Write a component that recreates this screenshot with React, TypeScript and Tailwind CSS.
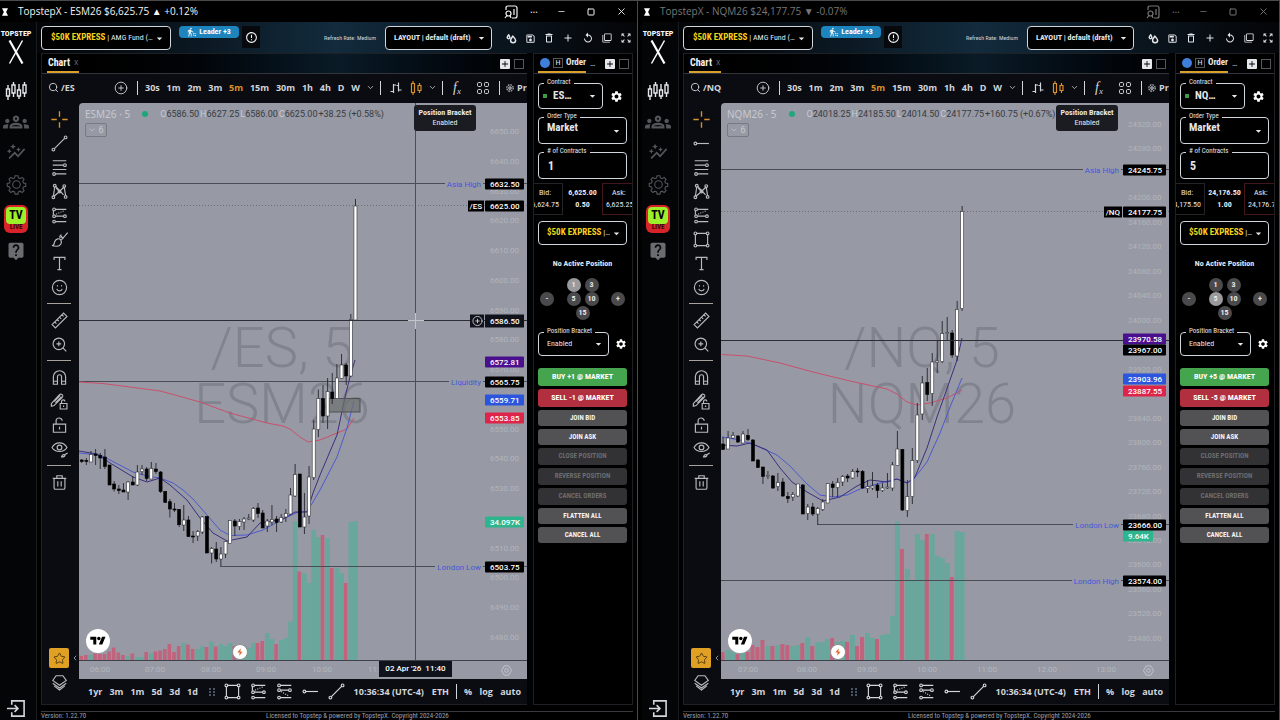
import type { ReactNode } from 'react'
import {
  MdAdd,
  MdArrowDropDown,
  MdAutoGraph,
  MdErrorOutline,
  MdLiveHelp,
  MdOutlineDelete,
  MdOutlineFilterNone,
  MdOutlineGroups,
  MdOutlineSave,
  MdReplay,
  MdSettings,
  MdTransferWithinAStation,
  MdZoomOutMap,
} from 'react-icons/md'
import { ChevronDown, ChevronLeft, CirclePlus, Minus, Search, Square, Star, X } from 'lucide-react'
import { clsx } from 'clsx'

type Dir = 'u' | 'd'
// high, low, body top, body bottom, direction, top of the volume bar
type Candle = [number, number, number, number, Dir, number]
type Tag = { y: number; text: string; tone: string; side?: string; from?: number; line?: 'solid' | 'dotted' }

type Market = {
  root: string
  contract: string
  title: string
  active: boolean
  bars: string
  ohlc: [string, string][]
  change: string
  qty: string
  picked: number
  bid: string
  last: string
  spread: string
  ask: string
  secondTool: ToolName
  sixthTool: ToolName
  originX: number
  firstX: number
  stepX: number
  axisClass: string
  marksClass: string
  ticks: { first: number; step: number; y: number; gap: number; count: number }
  hours: [string, number][]
  tags: Tag[]
  candles: Candle[]
  slow: string
  mid: string
  fast: string
  boltX: number
}

const PLOT_TOP = 103
const PLOT_BASE = 660

const es: Market = {
  root: '/ES',
  contract: 'ESM26',
  title: 'TopstepX - ESM26 $6,625.75 ▲ +0.12%',
  active: true,
  bars: 'ES…',
  ohlc: [['O', '6586.50'], ['H', '6627.25'], ['L', '6586.00'], ['C', '6625.00']],
  change: '+38.25 (+0.58%)',
  qty: '1',
  picked: 1,
  bid: '6,624.75',
  last: '6,625.00',
  spread: '0.50',
  ask: '6,625.25',
  secondTool: 'trend',
  sixthTool: 'brush',
  originX: 79,
  firstX: 81.7,
  stepX: 4.64,
  axisClass: 'w-[42px]',
  marksClass: 'right-[42px]',
  ticks: { first: 6650, step: 10, y: 131, gap: 29.75, count: 18 },
  hours: [['06:00', 100], ['07:00', 155], ['08:00', 211], ['09:00', 266], ['10:00', 322], ['11:00', 378]],
  tags: [
    { y: 183, text: '6632.50', tone: 'bg-black', side: 'Asia High', from: 79, line: 'solid' },
    { y: 205, text: '6625.00', tone: 'bg-black', from: 79, line: 'dotted' },
    { y: 361, text: '6572.81', tone: 'bg-[#4a0f8c]' },
    { y: 381, text: '6565.75', tone: 'bg-black', side: 'Liquidity', from: 79, line: 'solid' },
    { y: 399, text: '6559.71', tone: 'bg-[#2b55dd]' },
    { y: 417, text: '6553.85', tone: 'bg-[#de2448]' },
    { y: 521, text: '34.097K', tone: 'bg-[#2fb58e]' },
    { y: 566, text: '6503.75', tone: 'bg-black', side: 'London Low', from: 220, line: 'solid' },
  ],
  candles: [
    [459, 463, 460, 461.5, 'd', 656], [458, 465, 460.5, 461.5, 'd', 655], [451, 462, 454.5, 462, 'u', 655],
    [449, 465, 454, 455.5, 'd', 653.5], [453, 469, 455.5, 458, 'd', 654], [449, 469, 457, 466.5, 'd', 654],
    [465, 485, 465, 485, 'd', 651.5], [481, 491.5, 484, 489, 'd', 647.5], [485, 494, 489, 490.5, 'd', 652.5],
    [483, 492, 490, 492, 'd', 655], [481, 500, 482, 492, 'u', 656], [476, 485, 482, 485, 'd', 653.5],
    [465, 486, 472, 485, 'u', 657], [465, 475, 469, 471.5, 'u', 657], [467, 481, 469, 478.5, 'd', 652],
    [462, 479, 468.5, 479, 'u', 653.5], [463, 474, 469, 471.5, 'd', 651.5], [471, 493, 472, 491.5, 'd', 650.5],
    [491, 503, 491.5, 502.3, 'd', 649], [499, 517.5, 501.7, 509, 'd', 644], [503, 512, 509, 510, 'd', 652],
    [509, 527, 509.5, 524.7, 'd', 646], [505, 531, 520, 525, 'u', 643], [516, 537, 520, 536.5, 'd', 644.5],
    [531, 543, 536, 537, 'd', 649], [530, 541, 531.5, 536, 'u', 649], [516, 534, 517, 532, 'u', 646.5],
    [516, 553, 516.5, 553, 'd', 647], [547, 563.5, 548.5, 553, 'u', 641.5], [542, 562, 549, 559, 'd', 646.5],
    [547, 566, 554, 559, 'u', 644], [541, 558, 541.5, 554, 'u', 646], [520, 544, 520.5, 543.5, 'u', 643],
    [519, 536, 521, 526, 'd', 646], [519, 530, 521.5, 526.5, 'u', 647], [517, 530, 519, 522, 'u', 646],
    [514, 520, 518, 519, 'u', 648], [507, 522, 508.5, 520, 'u', 643], [503, 518, 508, 513.5, 'd', 643],
    [510, 528, 513, 528, 'd', 641], [519, 532, 521, 526, 'u', 633], [505, 525, 519.5, 522, 'u', 639],
    [516, 532, 519, 522.5, 'd', 644], [514, 523, 517.5, 522, 'u', 640], [509, 522, 513.5, 517, 'u', 638],
    [488, 515, 495, 514, 'u', 621.5], [464, 497, 474.5, 496, 'u', 521.5], [474, 527, 474, 527, 'd', 571.5],
    [493, 534, 517, 527, 'u', 573], [466, 524, 477, 516, 'u', 583], [420, 480, 429, 477.5, 'u', 530],
    [389.5, 437, 398.5, 429.5, 'u', 537], [385, 423, 398.5, 416, 'd', 535], [378, 429, 391.5, 416, 'u', 538],
    [373, 404, 392, 398.5, 'd', 568], [364, 399, 378, 398.5, 'u', 568], [354, 379, 365, 378.5, 'u', 573],
    [363, 385, 365, 376, 'd', 583], [314, 377, 319.5, 376, 'u', 522], [199, 320, 206, 320, 'u', 521],
  ],
  slow: '79,382 103,383.5 130,387 160,391 175,395 200,402 230,413 267,423 283,426 290,429 300,437 308,442 320,440 347,429 354,418',
  mid: '79,453 100,455 110,460 133,472 147,476 160,478 173,483 183,490 193,499 207,515 220,530 230,535.5 247,535 263,530 283,519 297,512.5 307,511.5 313,502 320,490 337,457 347,428 354,401',
  fast: '79,451 97,454 110,463 133,477 147,482 160,478 170,485 187,500 200,518 213,533 227,541 247,537 260,523 283,519 295,512 307,512 313,493 320,475 337,435 345,397 350,377 355,360',
  boltX: 240,
}

const nq: Market = {
  root: '/NQ',
  contract: 'NQM26',
  title: 'TopstepX - NQM26 $24,177.75 ▼ -0.07%',
  active: false,
  bars: 'NQ…',
  ohlc: [['O', '24018.25'], ['H', '24185.50'], ['L', '24014.50'], ['C', '24177.75']],
  change: '+160.75 (+0.67%)',
  qty: '5',
  picked: 5,
  bid: '24,175.50',
  last: '24,176.50',
  spread: '1.00',
  ask: '24,176.75',
  secondTool: 'ray',
  sixthTool: 'rect',
  originX: 721,
  firstX: 723.1,
  stepX: 4.98,
  axisClass: 'w-[46px]',
  marksClass: 'right-[46px]',
  ticks: { first: 24320, step: 40, y: 124, gap: 24.47, count: 22 },
  hours: [['07:00', 748], ['08:00', 807], ['09:00', 867], ['10:00', 927], ['11:00', 987], ['12:00', 1047], ['13:00', 1106]],
  tags: [
    { y: 169, text: '24245.75', tone: 'bg-black', side: 'Asia High', from: 721, line: 'solid' },
    { y: 211, text: '24177.75', tone: 'bg-black', from: 721, line: 'dotted' },
    { y: 338, text: '23970.58', tone: 'bg-[#4a0f8c]' },
    { y: 349, text: '23967.00', tone: 'bg-black' },
    { y: 378, text: '23903.96', tone: 'bg-[#2b55dd]' },
    { y: 390, text: '23887.55', tone: 'bg-[#de2448]' },
    { y: 535, text: '9.64K', tone: 'bg-[#2fb58e]' },
    { y: 524, text: '23666.00', tone: 'bg-black', side: 'London Low', from: 817, line: 'solid' },
    { y: 580, text: '23574.00', tone: 'bg-black', side: 'London High', from: 721, line: 'solid' },
  ],
  candles: [
    [437, 450, 444, 449.5, 'd', 652], [431, 449, 438, 449, 'u', 650], [432, 439, 435.5, 438, 'u', 652],
    [435, 443, 436, 442, 'd', 654], [431, 443, 434, 443, 'u', 653], [429, 441, 435.5, 439.5, 'd', 652],
    [439, 461, 440, 461, 'd', 645], [459, 468, 460, 467.5, 'd', 647], [467, 484, 467, 476.5, 'd', 640],
    [471, 479, 475.5, 476.5, 'u', 646], [475, 489, 476, 488, 'd', 646], [473, 491, 482.5, 486.5, 'u', 645],
    [478, 497, 482, 496, 'd', 644], [492, 503, 496.5, 498.5, 'd', 645], [492, 501, 494.5, 497, 'u', 646],
    [484, 497, 484, 496, 'u', 645], [484, 514, 485, 514, 'd', 643], [504, 520, 507, 513.5, 'u', 637],
    [503, 516, 507, 514, 'd', 646], [507, 524.5, 508.5, 514, 'u', 642], [499, 511, 502, 509.5, 'u', 642],
    [483, 503, 483.5, 503, 'u', 639], [481, 497, 484, 487.5, 'd', 638], [478, 497, 482.5, 487.5, 'u', 642],
    [475, 486, 476.5, 482, 'u', 641], [474, 482, 476, 478, 'd', 642], [469, 479, 471.5, 478, 'u', 635],
    [468, 477, 471, 472, 'd', 646], [470, 489, 471.5, 488, 'd', 637], [480, 493, 486.5, 488.5, 'u', 633],
    [472, 490, 486, 488, 'u', 638], [483, 498, 485, 490.5, 'd', 639], [483, 492, 488, 490.5, 'u', 635],
    [473, 489, 487, 488, 'u', 634], [462, 491, 465, 488, 'u', 616], [431, 466, 449, 465.5, 'u', 521.5],
    [449, 511, 449.5, 510, 'd', 549], [480, 517, 496.5, 510.5, 'u', 569], [448, 504, 460.5, 496.5, 'u', 580],
    [403, 463, 415, 460.5, 'u', 534], [376, 420, 383, 414, 'u', 540], [368, 401, 382.5, 394.5, 'd', 534],
    [353, 406, 362, 393.5, 'u', 534], [341, 373, 361, 362.5, 'u', 556], [321, 363, 333.5, 361.5, 'u', 558],
    [317, 341, 332.5, 333.5, 'u', 563], [330, 358, 333, 355, 'd', 577], [301, 361, 309.5, 356, 'u', 531],
    [206, 311, 211.5, 308.5, 'u', 532],
  ],
  slow: '722,354.5 747,356 780,363 813,372 850,381 887,389 897,394 907,402 917,405 930,403 947,398 962,390',
  mid: '722,437 740,440 757,446 777,455 790,466 807,484 820,495 833,497 847,495 860,489 880,483 897,479 907,483 913,480 927,462 940,433 950,407 962,378',
  fast: '722,445 737,446 750,443 767,450 780,468 792,482 807,492 823,501 840,497 857,486 870,480 887,482 897,479 907,483 915,477 927,448 937,417 950,380 957,360 962,338',
  boltX: 838,
}

const condensed = "font-['Roboto_Condensed','Liberation_Sans_Narrow',Roboto,sans-serif]"

/* ---------- drawing tool icons, 28px grid ---------- */

const tools = {
  cross: <path d="M14 2v8M14 18v8M2 14h8M18 14h8" strokeWidth="2" />,
  trend: (
    <>
      <circle cx="5" cy="23" r="2" />
      <circle cx="23" cy="5" r="2" />
      <path d="M6.500 21.500l15-15" />
    </>
  ),
  ray: (
    <>
      <circle cx="5" cy="14" r="2" />
      <path d="M7 14h18" />
    </>
  ),
  fib: (
    <>
      <path d="M4 4h20M4 10.500h16M4 17h20M8 23.500h16" />
      <circle cx="22" cy="10.500" r="2" />
      <circle cx="6" cy="23.500" r="2" />
    </>
  ),
  pattern: (
    <>
      <path d="M7 7L5 21M8 6l12 13M9 9l5 5 7-7M21 8l2 12M6 21l8-7" />
      <circle cx="7" cy="5.5" r="2" />
      <circle cx="21" cy="6" r="2" />
      <circle cx="5" cy="22.500" r="2" />
      <circle cx="23" cy="22" r="2" />
      <circle cx="14" cy="14" r="2" />
    </>
  ),
  levels: (
    <>
      <path d="M8 5h16M8 15h12M8 23h16M5 7v6" />
      <path d="M9 12l12-5" strokeDasharray="1.500 2" />
      <circle cx="6" cy="5" r="2" />
      <circle cx="6" cy="15" r="2" />
      <circle cx="22" cy="15" r="2" />
      <circle cx="6" cy="23" r="2" />
    </>
  ),
  levelsDown: (
    <>
      <path d="M8 5h16M8 12h12M8 23h16" />
      <path d="M9 14l12 7" strokeDasharray="1.500 2" />
      <circle cx="6" cy="5" r="2" />
      <circle cx="6" cy="12" r="2" />
      <circle cx="22" cy="12" r="2" />
      <circle cx="6" cy="23" r="2" />
    </>
  ),
  brush: <path d="M3 23c3 0 3-3 4-6 2-5 7-5 9-2s0 9-6 9c-3 0-5 0-7-1zM16 14c2 0 3-1 4-3l6-7M15 12c-1-2 0-4 2-5M17 9c0 2 1 3 3 3" />,
  rect: (
    <>
      <path d="M7 5h14M7 23h14M5 7v14M23 7v14" />
      <circle cx="5" cy="5" r="2" />
      <circle cx="23" cy="5" r="2" />
      <circle cx="5" cy="23" r="2" />
      <circle cx="23" cy="23" r="2" />
    </>
  ),
  text: <path d="M6 9V5h16v4M14 5v18M11 23h6" />,
  smile: (
    <>
      <circle cx="14" cy="14" r="10.500" />
      <path d="M10 16c1 4 7 4 8 0M11 10.500v2M17 10.500v2" />
    </>
  ),
  ruler: <path d="M3 20L20 3l5 5L8 25zM7 16l2.500 2.500M10.500 12.500L13 15M14 9l2.500 2.500M17.500 5.500L20 8" />,
  zoom: (
    <>
      <circle cx="13" cy="13" r="8.500" />
      <path d="M19 19l5 5M13 9.500v7M9.500 13h7" />
    </>
  ),
  magnet: <path d="M5 24V13a9 9 0 0118 0v11h-6V13a3 3 0 00-6 0v11zM5 19.500h6M17 19.500h6" />,
  penLock: (
    <>
      <path d="M2 17L14 4q2-2 4 0t0 4L6 20l-4 1zM6 14l9-9M8 16l9-9" />
      <path d="M15 17h10v8H15zM17 17v-3a2.500 2.500 0 015 0M20 20v2" />
    </>
  ),
  lock: <path d="M5 12h18v12H5zM9 12V8a4.500 4.500 0 019-1M14 16v4" />,
  eye: (
    <>
      <path d="M3 11c5-9 17-9 22 0-5 8-17 8-22 0z" />
      <circle cx="14" cy="11" r="3.500" />
      <path d="M17 25c1-4 3-4 5-3 0 3-3 3-5 3zM21 22l5-3" />
    </>
  ),
  trash: <path d="M4 8h20M10 8V4h8v4M6 8v14q0 2 2 2h12q2 0 2-2V8M11.500 12v8M16.500 12v8" />,
  layers: <path d="M4 11l5-7h10l5 7-10 7zM4 15l10 7 10-7M6 19l8 6 8-6" />,
}

type ToolName = keyof typeof tools

function ToolIcon({ name, className = 'size-[19px]' }: { name: ToolName; className?: string }) {
  return (
    <svg viewBox="0 0 28 28" className={className} fill="none" stroke="currentColor" strokeWidth="1.7" aria-hidden>
      {tools[name]}
    </svg>
  )
}

function ToolButton({ name, className }: { name: ToolName; className?: string }) {
  return (
    <button type="button" aria-label={name} className={clsx('flex h-6 w-full items-center justify-center', className)}>
      <ToolIcon name={name} />
    </button>
  )
}

/* ---------- window chrome ---------- */

function TitleBar({ market }: { market: Market }) {
  return (
    <header
      className={clsx(
        "flex h-[21px] shrink-0 items-center bg-black pl-0.5 font-['Open_Sans',sans-serif] text-[10px]",
        market.active ? 'text-gray-100' : 'text-[#777]',
      )}
    >
      <svg viewBox="0 0 8 10" className="mr-2 h-2 w-[6px] fill-white" aria-hidden>
        <path d="M0 0h8L5.500 5 8 10H0l2.500-5z" />
      </svg>
      <span className="flex-1 whitespace-nowrap pl-0.5">{market.title}</span>
      <button type="button" aria-label="Side panel" className="flex w-[22px] justify-center">
        <svg viewBox="0 0 14 14" className="size-[14px]" fill="none" stroke="currentColor" strokeWidth="1.200" aria-hidden>
          <path d="M2 5V3q0-2 2-2h7q2 0 2 2v8q0 2-2 2H8M10 4v6" />
          <circle cx="4.500" cy="8.500" r="2.500" />
          <path d="M3 10.500L1 13M6 10.500L7 13" />
        </svg>
      </button>
      <button type="button" aria-label="More" className="w-6 pb-1 text-center">
        …
      </button>
      <button type="button" aria-label="Minimize" className="flex w-[30px] justify-center">
        <Minus size={9} />
      </button>
      <button type="button" aria-label="Maximize" className="flex w-[30px] justify-center">
        <Square size={8} strokeWidth={3} />
      </button>
      <button type="button" aria-label="Close" className="mr-px flex w-[30px] justify-center">
        <X size={11} />
      </button>
    </header>
  )
}

function SideBar() {
  return (
    <nav className="flex w-[37px] shrink-0 flex-col items-center border-r border-[#1a1b1f] bg-[#040507] pr-1 text-[#55565a]">
      <a href="#home" aria-label="Topstep X" className="flex flex-col items-center pt-1.5 text-white">
        <span className={clsx(condensed, 'text-[8px]/[12px] font-bold')}>TOPSTEP</span>
        <svg viewBox="0 0 16 24" className="h-6 w-4" fill="none" stroke="currentColor" aria-hidden>
          <path d="M1.500 0.500L14.500 23.500" strokeWidth="2.200" />
          <path d="M14.500 0.500L1.500 23.500" strokeWidth="1.500" />
        </svg>
      </a>
      <button type="button" aria-label="Trade" className="mt-[15px] flex h-6 items-center text-gray-200">
        <svg viewBox="0 0 22 20" className="h-5 w-[22px]" fill="#040507" stroke="currentColor" strokeWidth="1.400" aria-hidden>
          <path d="M3 4v15M8.500 1v15M14 3v15M19.500 1v15" />
          <path d="M1.500 8h3v7h-3zM7 4h3v8H7zM12.500 9h3v6h-3zM18 4h3v8h-3z" />
        </svg>
      </button>
      <button type="button" aria-label="Community" className="mt-1.5">
        <MdOutlineGroups size={26} />
      </button>
      <button type="button" aria-label="Performance" className="mt-[7px]">
        <MdAutoGraph size={20} />
      </button>
      <button type="button" aria-label="Settings" className="mt-3">
        <svg viewBox="0 0 24 25" className="size-[21px]" fill="none" stroke="currentColor" strokeWidth="1.300" aria-hidden>
          <path d="M10.300 2h3.400l.6 2.700 2 .8 2.400-1.500 2.300 2.300-1.500 2.400.8 2 2.700.6v3.400l-2.700.6-.8 2 1.500 2.400-2.300 2.300-2.400-1.500-2 .8-.6 2.700h-3.400l-.6-2.700-2-.8-2.400 1.500L3 19.700l1.500-2.400-.8-2-2.700-.6v-3.400l2.700-.6.8-2L3 6.300 5.300 4l2.400 1.500 2-.8z" />
          <circle cx="12" cy="12.500" r="4.500" />
        </svg>
      </button>
      <button
        type="button"
        aria-label="TV live"
        className={clsx(condensed, 'mt-2.5 flex h-7 w-6 flex-col items-center overflow-hidden rounded-md bg-[#d8232a] p-0.5 text-black')}
      >
        <span className="w-full rounded-sm bg-[#9bf02a] text-[12px]/[17px] font-bold">TV</span>
        <span className="text-[7px]/[7px] font-bold text-[#3a0709]">LIVE</span>
      </button>
      <button type="button" aria-label="Help" className="mt-2 text-[#6b6c70]">
        <MdLiveHelp size={20} />
      </button>
      <button type="button" aria-label="Log out" className="mt-auto mb-0.5 text-gray-300">
        <svg viewBox="0 0 20 20" className="size-[19px]" fill="none" stroke="currentColor" strokeWidth="1.700" aria-hidden>
          <path d="M5 6V2h13v16H5v-4M0 10h11M8 6.500l3.500 3.500L8 13.500" />
        </svg>
      </button>
    </nav>
  )
}

function AccountButton({ label, className }: { label: string; className?: string }) {
  return (
    <button
      type="button"
      aria-haspopup="listbox"
      className={clsx('flex items-center justify-between rounded-sm border border-gray-300 bg-black text-[8px] text-gray-200', className)}
    >
      <span className="whitespace-nowrap">
        <span className="text-[9px] font-bold text-[#f5d21b]">$50K EXPRESS</span> {label}
      </span>
      <MdArrowDropDown size={13} className="shrink-0" />
    </button>
  )
}

function Select({ id, value, className }: { id: string; value: string; className?: string }) {
  return (
    <div className="relative">
      <select
        id={id}
        defaultValue={value}
        className={clsx('block w-full appearance-none rounded-sm border border-gray-300 bg-black px-[8px] text-gray-200', className)}
      >
        <option>{value}</option>
      </select>
      <MdArrowDropDown size={13} className="pointer-events-none absolute top-1/2 right-1 -translate-y-1/2 text-gray-200" />
    </div>
  )
}

function AppHeader({ market }: { market: Market }) {
  const actions: [string, ReactNode][] = [
    [
      'Link colors',
      <svg viewBox="0 0 12 12" className="size-[11px]" fill="none" stroke="currentColor" strokeWidth="1.600" aria-hidden>
        <path d="M3 2C1.500 3.500 1 4.500 1.500 5.500S3.500 6.500 4 5.500 4 3.500 3 2zM7.500 3.500C6 5.500 5 6.500 5 8a2.700 2.700 0 005.500 0c0-1.500-1-2.500-3-4.500z" />
      </svg>,
    ],
    ['Save', <MdOutlineSave size={11} />],
    ['Delete', <MdOutlineDelete size={12} />],
    ['Add', <MdAdd size={12} />],
    ['Reset', <MdReplay size={12} />],
    ['Duplicate', <MdOutlineFilterNone size={10} />],
    ['Full screen', <MdZoomOutMap size={12} />],
  ]
  return (
    <div className={clsx(condensed, 'flex h-[31px] shrink-0 items-start text-[9px]')}>
      <AccountButton label="| AMG Fund (…" className="mt-1 h-6 w-[130px] pr-1 pl-[9px]" />
      <button
        type="button"
        className="mt-1 ml-2 flex h-3 w-15 items-center justify-center gap-0.5 rounded-[4px] bg-[#1d84bd] text-[8px]/[12px] font-bold text-white"
      >
        <MdTransferWithinAStation size={10} />
        Leader +3
      </button>
      <button type="button" aria-label="Notices" className="mt-1 ml-[3px] flex h-[22px] w-[18px] items-center justify-center bg-[#07090d] text-gray-100">
        <MdErrorOutline size={13} />
      </button>
      <span className="mt-2.5 mr-[9px] ml-auto text-[6px]/[12px] text-gray-300">Refresh Rate: Medium</span>
      <div className="mt-1 w-[107px]">
        <Select id={`layout-${market.contract}`} value="LAYOUT | default (draft)" className="h-6 text-[8px] font-bold" />
      </div>
      <div className="mt-1 flex h-6 w-[141px] items-center justify-between pl-3 text-gray-200">
        {actions.map(([label, icon]) => (
          <button key={label} type="button" aria-label={label} className="flex w-[14px] justify-center">
            {icon}
          </button>
        ))}
      </div>
    </div>
  )
}

function PanelCorner() {
  return (
    <div className="ml-auto flex items-center gap-1 pr-[3px]">
      <button type="button" aria-label="Add tab" className="flex size-[10px] items-center justify-center rounded-[1px] bg-gray-200 text-black">
        <MdAdd size={10} />
      </button>
      <button type="button" aria-label="Maximize panel" className="size-[10px] border border-[#55565a]" />
    </div>
  )
}

/* ---------- chart ---------- */

const intervals = ['30s', '1m', '2m', '3m', '5m', '15m', '30m', '1h', '4h', 'D', 'W']
const ranges = ['1yr', '3m', '1m', '5d', '3d', '1d']

function Bar({ className = 'h-3.5' }: { className?: string }) {
  return <span className={clsx('w-px shrink-0 bg-gray-300', className)} />
}

function ChartToolbar({ market }: { market: Market }) {
  return (
    <div className="flex h-[29px] shrink-0 items-center overflow-hidden bg-[#0b0c11] pb-0.5 pl-1.5 text-[9px] font-bold whitespace-nowrap text-gray-300">
      <button type="button" className="flex w-[66px] shrink-0 items-center gap-0.5">
        <Search size={11} />
        {market.root}
      </button>
      <button type="button" aria-label="Compare" className="shrink-0">
        <CirclePlus size={14} strokeWidth={1.5} />
      </button>
      <Bar className="ml-[9px] h-3.5" />
      <div className="flex w-[228px] shrink-0 items-center justify-between pr-1.5 pl-[7px]">
        {intervals.map((t) => (
          <button key={t} type="button" className={t === '5m' ? 'text-[#d9912b]' : undefined}>
            {t}
          </button>
        ))}
      </div>
      <ChevronDown size={9} className="shrink-0" />
      <Bar className="ml-[5px] h-3.5" />
      <button type="button" aria-label="Bars" className="w-[29px] shrink-0 pl-[9px]">
        <svg viewBox="0 0 12 12" className="size-3" fill="none" stroke="currentColor" strokeWidth="1.200" aria-hidden>
          <path d="M3.500 2v9M0.500 9.500h3M3.500 3h2.500M8.500 0.500v9M6.500 3.500h2M8.500 8h3" />
        </svg>
      </button>
      <button type="button" aria-label="Candles" className="w-[18px] shrink-0 text-[#d9912b]">
        <svg viewBox="0 0 12 14" className="h-3.5 w-3" fill="none" stroke="currentColor" strokeWidth="1.200" aria-hidden>
          <path d="M1.500 2.500h3v9h-3zM3 0v2.500M3 11.500V14M8 4.500h3v5H8zM9.500 2v2.500M9.500 9.500V12" />
        </svg>
      </button>
      <ChevronDown size={9} className="shrink-0" />
      <Bar className="ml-[5px] h-3.5" />
      <button type="button" aria-label="Indicators" className="w-[34px] shrink-0 pl-2.5 text-left font-['Liberation_Serif',serif] text-[14px]/[14px] font-normal italic">
        f<sub className="text-[9px]">x</sub>
      </button>
      <button type="button" aria-label="Layouts" className="w-[22px] shrink-0">
        <svg viewBox="0 0 12 12" className="size-3" fill="none" stroke="currentColor" aria-hidden>
          <rect x="0.500" y="0.500" width="4" height="4" rx="1.200" />
          <rect x="7.500" y="0.500" width="4" height="4" rx="1.200" />
          <rect x="0.500" y="7.500" width="4" height="4" rx="1.200" />
          <rect x="7.500" y="7.500" width="4" height="4" rx="1.200" />
        </svg>
      </button>
      <Bar className="h-3.5" />
      <button type="button" className="flex shrink-0 items-center gap-[3px] pl-1.5">
        <svg viewBox="0 0 10 10" className="size-2" fill="none" stroke="currentColor" strokeWidth="1.300" aria-hidden>
          <circle cx="5" cy="5" r="4" strokeDasharray="2 1.140" />
          <circle cx="5" cy="5" r="1.500" />
        </svg>
        Product
      </button>
    </div>
  )
}

function DrawingTools({ market }: { market: Market }) {
  const sep = <span className="my-1 h-px w-6 shrink-0 bg-[#a9a29c]" />
  const names: ToolName[] = ['fib', 'pattern', 'levels', market.sixthTool, 'text', 'smile']
  return (
    <div className="flex w-[37px] shrink-0 flex-col items-center bg-[#0b0c11] pt-1 pr-[3px] text-[#b9babd]">
      <ToolButton name="cross" className="text-[#d9912b]" />
      <ToolButton name={market.secondTool} />
      {names.map((n) => (
        <ToolButton key={n} name={n} />
      ))}
      {sep}
      <ToolButton name="ruler" />
      <ToolButton name="zoom" />
      {sep}
      <ToolButton name="magnet" />
      <ToolButton name="penLock" />
      <ToolButton name="lock" />
      <ToolButton name="eye" />
      {sep}
      <ToolButton name="trash" />
      <div className="mt-auto -mr-[3px] flex w-[37px] items-center justify-between pl-[7px]">
        <button type="button" aria-label="Favorites" className="flex size-5 items-center justify-center rounded-[2px] bg-[#e0a024] text-[#3d2c0c]">
          <Star size={13} strokeWidth={1.500} />
        </button>
        <ChevronLeft size={8} className="text-gray-300" />
      </div>
      <ToolButton name="layers" className="mt-0.5 mb-2.5" />
    </div>
  )
}

function Plot({ market }: { market: Market }) {
  const { originX, firstX, stepX, candles, tags } = market
  return (
    <svg className="absolute inset-0 h-full w-full" aria-label={`${market.contract} 5 minute candles`}>
      <g transform={`translate(${-originX} ${-PLOT_TOP})`}>
        {candles.map(([, , , , dir, top], i) => (
          <rect
            key={i}
            x={firstX + i * stepX - stepX / 2}
            y={top}
            width={dir === 'u' ? stepX : stepX - 1}
            height={PLOT_BASE - top}
            fill={dir === 'u' ? '#69a69b' : '#c1637c'}
          />
        ))}
      </g>
      {tags
        .filter((t) => t.line)
        .map((t) => (
          <line
            key={t.text}
            x1={(t.from ?? originX) - originX}
            x2="100%"
            y1={t.y - PLOT_TOP + 0.5}
            y2={t.y - PLOT_TOP + 0.5}
            stroke={t.line === 'dotted' ? '#6b6e77' : '#4a4d55'}
            strokeDasharray={t.line === 'dotted' ? '1 2' : undefined}
          />
        ))}
      <g transform={`translate(${-originX} ${-PLOT_TOP})`} fill="none">
        <polyline points={market.slow} stroke="#c9506c" />
        <polyline points={market.mid} stroke="#4f58cf" />
        <polyline points={market.fast} stroke="#3b2f7d" />
        {market.active && <rect x="328" y="398.500" width="32" height="13.500" fill="#6d706f" fillOpacity="0.700" stroke="#4d5055" />}
        {candles.map(([high, low, top, bottom, dir], i) => {
          const x = firstX + i * stepX
          return (
            <g key={i}>
              <line x1={x} x2={x} y1={high} y2={low} stroke="#24262b" strokeWidth="0.900" />
              <rect
                x={x - 1.5}
                y={top}
                width="3"
                height={Math.max(bottom - top, 1)}
                fill={dir === 'u' ? '#fff' : '#000'}
                stroke={dir === 'u' ? '#33353a' : '#000'}
                strokeWidth="0.600"
              />
            </g>
          )
        })}
      </g>
      {market.active ? (
        <g>
          <path d="M336.500 0V557" stroke="#4b4e56" />
          <path d="M0 217.500H448" stroke="#2c2e35" />
          <path d="M329 217.500h16M336.500 210v16" stroke="#c3c5cb" />
        </g>
      ) : (
        <path d="M0 237.500H448" stroke="#2c2e35" />
      )}
    </svg>
  )
}

function PriceAxis({ market }: { market: Market }) {
  const { ticks, tags } = market
  const row = 'absolute flex -translate-y-1/2 items-center whitespace-nowrap'
  const labels = Array.from({ length: ticks.count }, (_, i) => ({
    y: Math.round(ticks.y + i * ticks.gap),
    text: (ticks.first - i * ticks.step).toFixed(2),
  }))
  // a tick that sits right behind a full-width tag is left out
  const visible = labels.filter((l) => !tags.some((t) => t.text.length > 6 && Math.abs(t.y - l.y) < 6))
  return (
    <div className={clsx("absolute inset-y-0 right-0 font-['Roboto',sans-serif] text-[8px]/[11px]", market.axisClass)}>
      {visible.map((l) => (
        <span key={l.text} className={clsx(row, 'left-[5px] text-[#b1b4bc]')} style={{ top: l.y - PLOT_TOP }}>
          {l.text}
        </span>
      ))}
      {tags.map((t) => (
        <div key={t.text} className={clsx(row, 'left-0')} style={{ top: t.y - PLOT_TOP + 0.5 }}>
          {t.side && <span className="absolute right-full mr-0.5 bg-[#979aa4] px-0.5 text-[#4657dc]">{t.side}</span>}
          {t.line === 'dotted' && <span className="absolute right-full mr-px bg-black px-0.5 font-medium text-white">{market.root}</span>}
          <span className={clsx('rounded-[1px] pr-1 pl-[5px] font-medium text-white', t.tone)}>{t.text}</span>
        </div>
      ))}
      {market.active && (
        <div className={clsx(row, 'top-[218px] left-0')}>
          <span className="absolute right-full mr-px flex h-[13px] w-[14px] items-center justify-center bg-[#10131c] text-white">
            <CirclePlus size={11} strokeWidth={1.500} />
          </span>
          <span className="bg-[#10131c] py-px pr-1 pl-[5px] font-medium text-white">6586.50</span>
        </div>
      )}
    </div>
  )
}

function Chart({ market }: { market: Market }) {
  return (
    <div className="flex min-h-0 flex-1 flex-col overflow-hidden rounded-tl-[4px] bg-[#979aa4]">
      <div className="relative flex-1 border-b border-[#3f424a]">
        <div
          className={clsx(
            "absolute inset-y-0 left-0 flex flex-col items-center justify-center pb-3 font-['Roboto',sans-serif] text-[56px]/[56px] font-light text-[#81848e]",
            market.marksClass,
          )}
        >
          <span>{market.root}, 5</span>
          <span>{market.contract}</span>
        </div>
        <Plot market={market} />
        <PriceAxis market={market} />
        <div className="absolute top-1 left-1.5 font-['Roboto',sans-serif] text-[9px]/[14px] whitespace-nowrap text-[#383b43]">
          <div className="flex items-center">
            <span className="font-['Noto_Sans',sans-serif] text-[10px] text-[#c6c9d2]">{market.contract} · 5</span>
            <span className="mx-3 size-[6px] rounded-full bg-[#1fa67a]" />
            {market.ohlc.map(([k, v]) => (
              <span key={k} className="mr-px">
                <span className="text-[#c6c9d2]">{k}</span>
                {v}
              </span>
            ))}
            <span>{market.change}</span>
          </div>
          <button type="button" className="mt-0.5 flex h-3.5 w-[22px] items-center justify-center gap-0.5 rounded-[2px] border border-[#777a83] text-[#c6c9d2]">
            <ChevronDown size={8} />6
          </button>
        </div>
        <div className={clsx(condensed, 'absolute top-0.5 right-[51px] w-[62px] rounded-[3px] bg-[#1b1c22] py-[3px] text-center text-[8px]/[10px] text-gray-200')}>
          <div className="font-bold">Position Bracket</div>
          <div>Enabled</div>
        </div>
        <div className="absolute bottom-[7px] left-[7px] flex size-6 items-center justify-center rounded-full bg-white">
          <svg viewBox="0 0 36 28" className="h-3 w-4" aria-hidden>
            <path d="M14 22H7V11H0V4h14zM28 22h-8l7.500-18h8z" />
            <circle cx="20" cy="8" r="4" />
          </svg>
        </div>
        <div
          className="absolute bottom-0 flex size-4 -translate-x-1/2 items-center justify-center rounded-full border border-[#8d8f95] bg-white text-[#e2682f]"
          style={{ left: market.boltX - market.originX }}
        >
          <svg viewBox="0 0 8 10" className="h-2 w-1.5 fill-current" aria-hidden>
            <path d="M5 0L0.500 5.500H3.500L3 10l4.500-5.500h-3z" />
          </svg>
        </div>
      </div>
      <div className="relative h-[18px] shrink-0 font-['Roboto',sans-serif] text-[8px]/[18px] text-[#b4b7bf]">
        {market.hours.map(([label, x]) => (
          <span key={label} className="absolute -translate-x-1/2" style={{ left: x - market.originX }}>
            {label}
          </span>
        ))}
        {market.active && (
          <span className="absolute top-0 left-[300px] w-[73px] bg-[#10131c] text-center text-[8px]/[16px] font-medium whitespace-pre text-white">
            02 Apr '26  11:40
          </span>
        )}
        <button type="button" aria-label="Axis settings" className="absolute top-1 right-[15px] text-[#c6c9d2]">
          <svg viewBox="0 0 12 12" className="size-[11px]" fill="none" stroke="currentColor" aria-hidden>
            <path d="M3.500 1h5l3 5-3 5h-5l-3-5z" />
            <circle cx="6" cy="6" r="2" />
          </svg>
        </button>
      </div>
    </div>
  )
}

function ChartFooter() {
  return (
    <div className="flex h-[25px] shrink-0 items-center bg-[#0b0c11] pr-1.5 pl-[9px] text-[9px] font-bold whitespace-nowrap text-gray-300">
      <div className="flex w-[110px] justify-between">
        {ranges.map((r) => (
          <button key={r} type="button">
            {r}
          </button>
        ))}
      </div>
      <span className="mr-2 ml-[11px] h-2 w-1.5 border-x-2 border-dotted border-gray-600" />
      <div className="flex flex-1 items-center justify-between pr-2">
        <ToolIcon name="rect" />
        <ToolIcon name="levels" />
        <ToolIcon name="levelsDown" />
        <ToolIcon name="ray" />
        <ToolIcon name="trend" />
      </div>
      <button type="button">10:36:34 (UTC-4)</button>
      <button type="button" className="ml-2">
        ETH
      </button>
      <Bar className="mx-[7px] h-[15px]" />
      <div className="flex w-[57px] justify-between">
        <button type="button">%</button>
        <button type="button">log</button>
        <button type="button">auto</button>
      </div>
    </div>
  )
}

function ChartPane({ market }: { market: Market }) {
  return (
    <section className="flex min-w-0 flex-1 flex-col border border-r-0 border-[#1f2024]">
      <div className={clsx(condensed, 'flex h-5 shrink-0 items-center border-b border-[#33353a] pl-[5px]')}>
        <div className="flex h-full items-center gap-1 border-b-2 border-[#d9a02b] px-px text-[10px] font-bold text-gray-100">
          Chart <span className="text-[8px] font-normal text-[#66686d]">X</span>
        </div>
        <PanelCorner />
      </div>
      <ChartToolbar market={market} />
      <div className="flex min-h-0 flex-1 bg-[#0b0c11]">
        <DrawingTools market={market} />
        <div className="flex min-w-0 flex-1 flex-col">
          <Chart market={market} />
          <ChartFooter />
        </div>
      </div>
    </section>
  )
}

/* ---------- order panel ---------- */

function Field({ id, label, className, children }: { id: string; label: string; className?: string; children: ReactNode }) {
  return (
    <div className={clsx('relative', className)}>
      {children}
      <label htmlFor={id} className="absolute -top-1.5 left-1.5 bg-black px-[3px] text-[7px]/[10px] whitespace-nowrap text-gray-200">
        {label}
      </label>
    </div>
  )
}

const steps = [
  [1, 3],
  [5, 10],
]

function OrderPanel({ market }: { market: Market }) {
  const id = market.contract
  const orders: [string, string][] = [
    [`BUY +${market.qty} @ MARKET`, 'h-[18px] bg-[#45a44e] text-[8px] text-white'],
    [`SELL -${market.qty} @ MARKET`, 'h-[18px] bg-[#b12f3e] text-[8px] text-white'],
    ['JOIN BID', 'h-4 bg-[#525254] text-[7px] text-gray-100'],
    ['JOIN ASK', 'h-4 bg-[#525254] text-[7px] text-gray-100'],
    ['CLOSE POSITION', 'h-[17px] bg-[#323234] text-[7px] text-[#6c6c6e]'],
    ['REVERSE POSITION', 'h-[17px] bg-[#323234] text-[7px] text-[#6c6c6e]'],
    ['CANCEL ORDERS', 'h-[17px] bg-[#323234] text-[7px] text-[#6c6c6e]'],
    ['FLATTEN ALL', 'h-4 bg-[#525254] text-[7px] text-gray-100'],
    ['CANCEL ALL', 'h-4 bg-[#525254] text-[7px] text-gray-100'],
  ]
  const round = 'size-[14px] rounded-full text-center text-[8px]/[14px] font-bold text-gray-200'
  return (
    <section className={clsx(condensed, 'w-[100px] shrink-0 overflow-hidden border border-[#1f2024] bg-black text-gray-200')}>
      <div className="flex h-5 items-center border-b border-[#33353a] pl-1">
        <div className="flex h-full shrink-0 items-center gap-[3px] border-b-2 border-[#d9a02b] pl-0.5 text-[9px] font-bold">
          <span className="size-[10px] shrink-0 rounded-full bg-[#3f7fdc]" />
          <span className="flex size-[10px] shrink-0 items-center justify-center border border-[#55565a] text-[8px]/[8px] font-normal">H</span>
          Order
        </div>
        <span className="pl-1 text-[9px]">…</span>
        <PanelCorner />
      </div>
      <div className="pr-[5px] pl-1">
        <div className="flex items-center justify-between pt-[9px] pr-1">
          <Field id={`contract-${id}`} label="Contract" className="w-[65px]">
            <Select id={`contract-${id}`} value={market.bars} className="h-[26px] pl-[14px] text-[11px] font-bold" />
            <span className="absolute top-[11px] left-[5px] size-1 bg-[#3f9a48]" />
          </Field>
          <button type="button" aria-label="Contract settings" className="text-white">
            <MdSettings size={13} />
          </button>
        </div>
        <Field id={`type-${id}`} label="Order Type" className="mt-2">
          <Select id={`type-${id}`} value="Market" className="h-[27px] pb-1 text-[11px] font-bold" />
        </Field>
        <Field id={`qty-${id}`} label="# of Contracts" className="mt-2">
          <input
            id={`qty-${id}`}
            defaultValue={market.qty}
            className="block h-[27px] w-full rounded-sm border border-gray-300 bg-black px-[9px] text-[12px] font-bold text-gray-200"
          />
        </Field>
      </div>
      <div className="mt-1 flex h-8 text-center text-[8px]/[12px]">
        <div className="flex w-[29px] flex-col items-end overflow-hidden border border-l-0 border-[#232428] pt-[3px] pr-[3px] whitespace-nowrap">
          <span className="pr-2">Bid:</span>
          <span>{market.bid}</span>
        </div>
        <div className="flex-1 pt-1">
          <div className="font-bold">{market.last}</div>
          <div className="font-bold">{market.spread}</div>
        </div>
        <div className="w-[30px] overflow-hidden border border-r-0 border-[#43151d] pt-[3px] pl-[3px] text-left whitespace-nowrap">
          <div className="pl-1.5">Ask:</div>
          {market.ask}
        </div>
      </div>
      <div className="pt-1.5 pr-[5px] pl-1">
        <AccountButton label="|…" className="h-6 w-full pr-1 pl-2" />
        <p className="mt-3 text-center text-[8px]/[14px] font-bold">No Active Position</p>
        <div className="mt-[7px] flex items-center justify-between px-0.5">
          <button type="button" aria-label="Decrease" className={clsx(round, 'bg-[#4a4a4c]')}>
            -
          </button>
          <div className="flex flex-col items-center">
            {steps.map((pair) => (
              <div key={pair[0]} className="flex gap-1">
                {pair.map((n) => (
                  <button key={n} type="button" className={clsx(round, n === market.picked ? 'bg-[#9a9a9c]' : 'bg-[#4a4a4c]')}>
                    {n}
                  </button>
                ))}
              </div>
            ))}
            <button type="button" className={clsx(round, 'bg-[#4a4a4c]')}>
              15
            </button>
          </div>
          <button type="button" aria-label="Increase" className={clsx(round, 'bg-[#4a4a4c]')}>
            +
          </button>
        </div>
        <div className="mt-3 flex items-center justify-between">
          <Field id={`bracket-${id}`} label="Position Bracket" className="w-[71px]">
            <Select id={`bracket-${id}`} value="Enabled" className="h-6 text-[8px]" />
          </Field>
          <button type="button" aria-label="Bracket settings" className="text-white">
            <MdSettings size={12} />
          </button>
        </div>
        <div className="mt-3 flex flex-col gap-[3px]">
          {orders.map(([label, tone]) => (
            <button key={label} type="button" className={clsx('rounded-[3px] font-bold', tone)}>
              {label}
            </button>
          ))}
        </div>
      </div>
    </section>
  )
}

function TradingWindow({ market, className }: { market: Market; className?: string }) {
  return (
    <div className={clsx('flex min-w-0 flex-col border-t border-r border-t-[#4a4a4c] border-r-[#4a4a4c] bg-black', className)}>
      <TitleBar market={market} />
      <div className="flex min-h-0 flex-1">
        <SideBar />
        <main className="flex min-w-0 flex-1 flex-col pr-1 pl-1">
          <div className="-mx-1 flex flex-col bg-linear-to-r from-[#040507] via-[#122b3d] to-[#040507] px-1">
            <AppHeader market={market} />
          </div>
          <div className="flex min-h-0 flex-1 gap-1.5 bg-linear-to-r from-black via-[#0a1b27] to-black">
            <ChartPane market={market} />
            <OrderPanel market={market} />
          </div>
          <footer className={clsx(condensed, 'mt-1.5 flex h-[9px] shrink-0 border-t border-[#3a3b3f] text-[7px]/[9px] whitespace-nowrap text-gray-400')}>
            <span className="flex-[11]">Version: 1.22.70</span>
            <span>Licensed to Topstep &amp; powered by TopstepX. Copyright 2024-2026</span>
            <span className="flex-[9]" />
          </footer>
        </main>
      </div>
    </div>
  )
}

export default function App() {
  return (
    <div className="grid h-screen min-h-[720px] grid-cols-[638fr_642fr] bg-black font-['Open_Sans',sans-serif]">
      <TradingWindow market={es} />
      <TradingWindow market={nq} className="pl-1" />
    </div>
  )
}
